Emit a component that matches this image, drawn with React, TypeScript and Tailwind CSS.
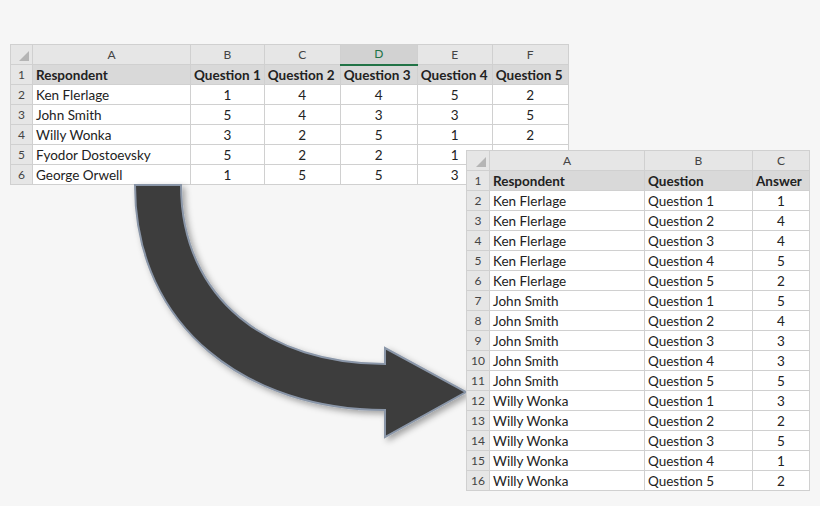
const wide = {
  cols: [158, 73, 76, 77, 75, 76],
  letters: ['A', 'B', 'C', 'D', 'E', 'F'],
  rows: [
    ['Respondent', 'Question 1', 'Question 2', 'Question 3', 'Question 4', 'Question 5'],
    ['Ken Flerlage', '1', '4', '4', '5', '2'],
    ['John Smith', '5', '4', '3', '3', '5'],
    ['Willy Wonka', '3', '2', '5', '1', '2'],
    ['Fyodor Dostoevsky', '5', '2', '2', '1', '2'],
    ['George Orwell', '1', '5', '5', '3', '1'],
  ],
};

const people = ['Ken Flerlage', 'John Smith', 'Willy Wonka'];
const answers = [1, 4, 4, 5, 2, 5, 4, 3, 3, 5, 3, 2, 5, 1, 2];
const tall = {
  cols: [155, 108, 57],
  letters: ['A', 'B', 'C'],
  rows: [
    ['Respondent', 'Question', 'Answer'],
    ...answers.map((a, i) => [people[Math.floor(i / 5)], `Question ${(i % 5) + 1}`, String(a)]),
  ],
};

function Sheet({ data, rowNum, selected }: { data: typeof wide; rowNum: number; selected?: number }) {
  return (
    <table className="border-collapse text-[13.5px] text-[#222] bg-white" style={{ fontFamily: 'Lato, "Open Sans", sans-serif' }}>
      <thead>
        <tr className="h-[20px] bg-[#e6e6e6] text-[12px] text-[#444]">
          <th className="border border-[#d0d0d0] p-0 relative" style={{ width: rowNum }}>
            <svg className="absolute right-[3px] bottom-[3px]" width="10" height="10"><path d="M10 0 L10 10 L0 10 Z" fill="#b5b5b5" /></svg>
          </th>
          {data.letters.map((l, i) => (
            <th
              key={l}
              className={`border border-[#d0d0d0] p-0 font-normal ${i === selected ? 'bg-[#d2d2d2] border-b-2 border-b-[#217346] text-[#217346]' : ''}`}
              style={{ width: data.cols[i] }}
            >
              {l}
            </th>
          ))}
        </tr>
      </thead>
      <tbody>
        {data.rows.map((r, ri) => (
          <tr key={ri} className={`h-[20px] ${ri === 0 ? 'bg-[#d9d9d9] font-bold' : ''}`}>
            <td className="border border-[#d0d0d0] bg-[#e6e6e6] text-center text-[12px] text-[#444] p-0 font-normal">{ri + 1}</td>
            {r.map((c, ci) => {
              const num = /^\d$/.test(c);
              return (
                <td key={ci} className={`border border-[#d0d0d0] px-[3px] py-0 leading-[18px] whitespace-nowrap ${num ? 'text-center' : 'text-left'}`}>
                  {c}
                </td>
              );
            })}
          </tr>
        ))}
      </tbody>
    </table>
  );
}

export default function App() {
  return (
    <div className="relative w-[820px] h-[506px] bg-[#f6f6f6] overflow-hidden">
      <div className="absolute left-[10px] top-[44px]">
        <Sheet data={wide} rowNum={22} selected={3} />
      </div>
      <svg className="absolute left-0 top-0" width="820" height="506">
        <defs>
          <filter id="sh" x="-10%" y="-10%" width="130%" height="130%">
            <feDropShadow dx="3" dy="3" stdDeviation="3" floodColor="#000" floodOpacity="0.35" />
          </filter>
        </defs>
        <path
          d="M135 185 C135 330 250 410 385 410 L385 437 L466 392 L385 348 L385 364 C270 364 181 300 181 185 Z"
          fill="#3c3c3c"
          stroke="#8a96a8"
          strokeWidth="2"
          filter="url(#sh)"
        />
      </svg>
      <div className="absolute left-[466px] top-[150px]">
        <Sheet data={tall} rowNum={23} />
      </div>
    </div>
  );
}
